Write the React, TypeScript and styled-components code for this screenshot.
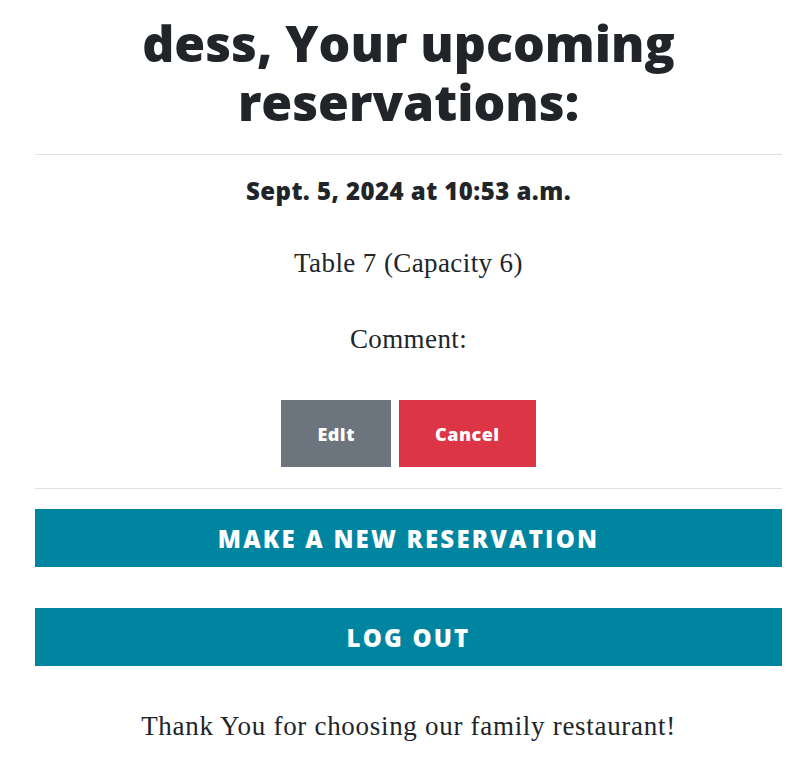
import React from 'react';
import styled, {createGlobalStyle} from 'styled-components';

const GlobalStyle = createGlobalStyle`
  * {
    box-sizing: border-box;
  }
  body {
    margin: 0;
    background: #fff;
    color: #212529;
    font-family: "Liberation Serif", serif;
  }
`

const Page = styled.main`
  margin: 0 30px 0 35px;
  padding-top: 14px;
  text-align: center;
`
const Title = styled.h1`
  margin: 0;
  font-family: "Open Sans", sans-serif;
  font-weight: 800;
  font-size: 50px;
  line-height: 59px;
  color: #212529;
`
const Divider = styled.hr<{$top: number}>`
  margin: ${p => p.$top}px 0 0;
  border: none;
  border-top: 1px solid #dee2e6;
`
const Reservation = styled.section`
  display: flex;
  flex-direction: column;
  align-items: center;
`
const DateLine = styled.h3`
  margin: 19px 0 0;
  font-family: "Open Sans", sans-serif;
  font-weight: 800;
  font-size: 24px;
  line-height: 33px;
  letter-spacing: 0.45px;
`
const Text = styled.p<{$top: number}>`
  margin: ${p => p.$top}px 0 0;
  font-size: 27px;
  line-height: 36px;
  letter-spacing: 0.4px;
`
const Closing = styled(Text)`
  margin-top: 42px;
  letter-spacing: 0.7px;
`
const Actions = styled.div`
  margin-top: 43px;
  display: flex;
  gap: 8px;
  justify-content: center;
`
const SmallButton = styled.button<{$variant: 'edit' | 'cancel'}>`
  height: 67px;
  padding: 0 36px;
  border: none;
  border-radius: 0;
  background: ${p => p.$variant === 'edit' ? '#6c757d' : '#dc3545'};
  color: #fff;
  font-family: "Open Sans", sans-serif;
  font-weight: 800;
  font-size: 18px;
  letter-spacing: 0.5px;
  cursor: pointer;
`
const WideButton = styled.button<{$top: number}>`
  display: block;
  width: 100%;
  height: 58px;
  margin-top: ${p => p.$top}px;
  border: none;
  border-radius: 0;
  background: #0085a1;
  color: #fff;
  font-family: "Open Sans", sans-serif;
  font-weight: 800;
  font-size: 24px;
  letter-spacing: 2.2px;
  text-transform: uppercase;
  cursor: pointer;
`

const App: React.FC = () => {
    return (
        <>
            <GlobalStyle/>
            <Page>
                <Title>dess, Your upcoming reservations:</Title>
                <Divider $top={22}/>
                <Reservation>
                    <DateLine>Sept. 5, 2024 at 10:53 a.m.</DateLine>
                    <Text $top={38}>Table 7 (Capacity 6)</Text>
                    <Text $top={40}>Comment: </Text>
                    <Actions>
                        <SmallButton $variant="edit">Edit</SmallButton>
                        <SmallButton $variant="cancel">Cancel</SmallButton>
                    </Actions>
                </Reservation>
                <Divider $top={21}/>
                <WideButton $top={20}>Make a new reservation</WideButton>
                <WideButton $top={41}>Log out</WideButton>
                <Closing $top={42}>Thank You for choosing our family restaurant!</Closing>
            </Page>
        </>
    );
};

export default App;
